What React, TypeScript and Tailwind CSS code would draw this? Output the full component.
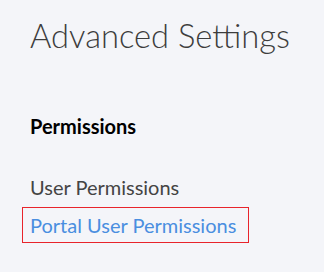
import React from "react";

export default function App() {
  return (
    <div
      className="w-[324px] h-[272px] bg-[#f4f5f9] overflow-hidden"
      style={{ fontFamily: "Lato, 'Open Sans', sans-serif" }}
    >
      <div className="pl-[30px] pt-[16px]">
        <h1 className="text-[32.7px] leading-[40px] font-light text-[#3d3d3d]">
          Advanced Settings
        </h1>
        <h2 className="mt-[58px] text-[20px] leading-[24px] font-bold text-black">
          Permissions
        </h2>
        <div className="mt-[37px] text-[20px] leading-[24px] text-[#444444]">
          User Permissions
        </div>
        <div className="mt-[8px] -ml-[8px] w-[227px] h-[36px] border border-[#e8242c] pl-[7px] flex items-center">
          <span className="text-[20px] leading-[24px] text-[#4a8ee0]">
            Portal User Permissions
          </span>
        </div>
      </div>
    </div>
  );
}
